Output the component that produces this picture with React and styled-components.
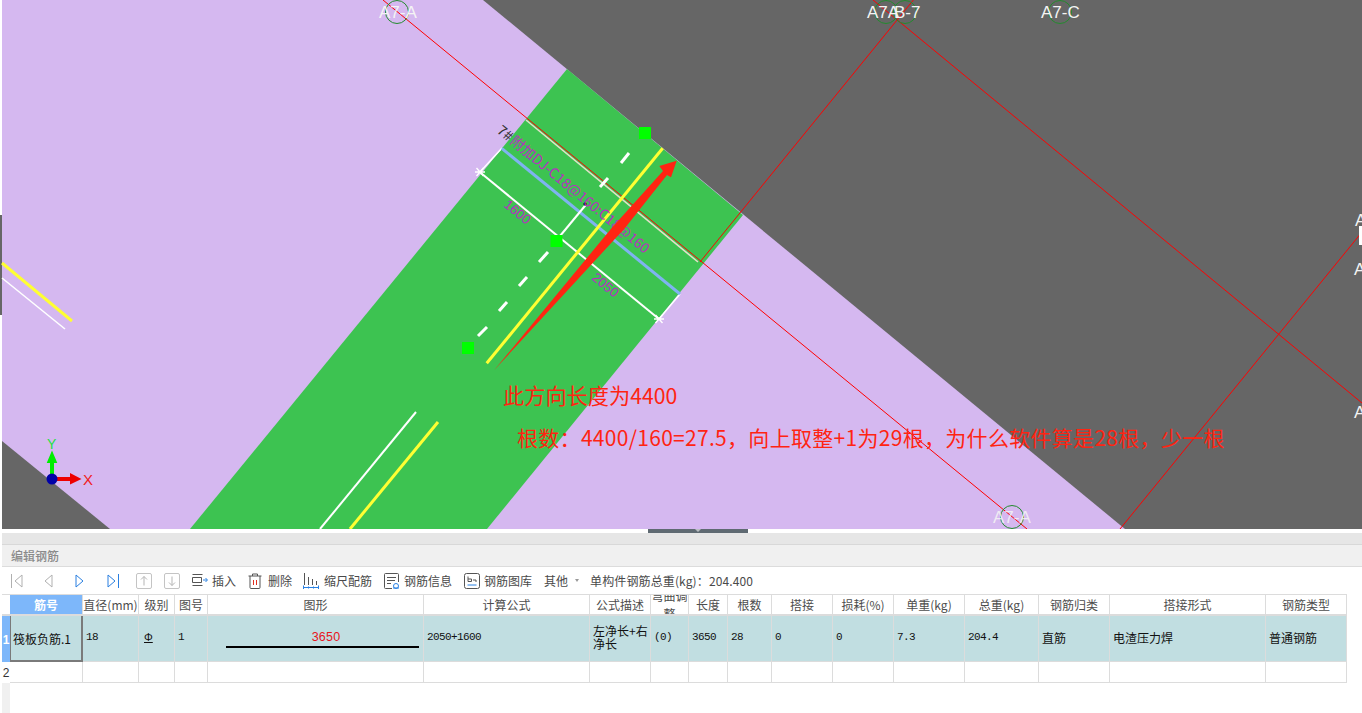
import React from 'react';
import styled, { createGlobalStyle } from 'styled-components';

const CJK = '"Noto Sans CJK SC", "Liberation Sans", sans-serif';

const Global = createGlobalStyle`
  html, body { margin: 0; padding: 0; background: #fff; overflow: hidden; }
  #root { width: 1362px; height: 713px; }
`;

const Page = styled.div`
  width: 1362px; height: 713px; display: flex; flex-direction: column;
  overflow: hidden; font-family: ${CJK}; font-size: 12px; background: #fff;
`;
const Canvas = styled.svg`
  display: block; width: 1362px; height: 529px; flex: none;
`;
const Panel = styled.section`
  flex: 1; margin-left: 2px; display: flex; flex-direction: column; min-height: 0;
`;
const Splitter = styled.div`
  height: 4px; background: #fff; display: flex; justify-content: center; flex: none; padding-left: 34px;
`;
const Grip = styled.div`
  width: 100px; height: 4px; background: #5f6a72; display: flex; justify-content: center;
  &::after {
    content: ''; width: 0; height: 0; border-left: 3px solid transparent;
    border-right: 3px solid transparent; border-top: 3px solid #b9bec2;
  }
`;
const Band = styled.div`
  height: 11px; background: #e6e6e6; border-bottom: 1px solid #d8d8d8; flex: none;
`;
const TitleBar = styled.div`
  height: 21px; background: #f0f0f0; border-bottom: 1px solid #dcdcdc; flex: none;
  display: flex; align-items: center; padding-left: 9px; color: #8a8a8a; font-weight: 500; font-size: 12px;
`;
const Toolbar = styled.div`
  height: 27px; flex: none; display: flex; align-items: center; padding-left: 9px;
  color: #4a4a4a; font-size: 12px; white-space: nowrap;
`;
const ToolIcon = styled.svg`
  flex: none; display: block; margin-left: ${p => p.$ml || 0}px;
`;
const ToolLabel = styled.span`
  margin-left: ${p => p.$ml || 0}px; line-height: 16px;
`;
const TotalLabel = styled(ToolLabel)`
  letter-spacing: 0.12px;
`;
const Caret = styled.span`
  width: 0; height: 0; margin-left: 7px; border-left: 2.5px solid transparent;
  border-right: 2.5px solid transparent; border-top: 3px solid #999;
`;
const Body = styled.div`
  flex: 1; display: flex; min-height: 0; align-items: stretch;
`;
const Sheet = styled.div`
  display: grid; align-self: flex-start;
  grid-template-columns: 8px 73px 56px 36px 33px 216px 166px 61px 38px 39px 44px 61px 61px 71px 74px 71px 156px 81px;
  grid-template-rows: 21px 46px 21px;
  border-top: 1px solid #dcdcdc;
`;
const Corner = styled.div`
  background: #fff; border-bottom: 2px solid #dcdcdc;
`;
const HeadCell = styled.div`
  box-sizing: border-box; display: flex; align-items: center; justify-content: center; text-align: center;
  overflow: hidden; color: ${p => p.$active ? '#fff' : '#4d4d4d'};
  background: ${p => p.$active ? '#7db7fa' : '#fff'};
  border-right: 1px solid #dcdcdc; border-bottom: 2px solid #dcdcdc;
  line-height: 18px; font-weight: ${p => p.$active ? 700 : 400};
`;
const RowHead = styled.div`
  display: flex; align-items: center; justify-content: center; overflow: hidden;
  background: ${p => p.$active ? '#7db7fa' : '#fff'};
  color: ${p => p.$active ? '#fff' : '#333'}; font-weight: ${p => p.$active ? 700 : 400};
  font-family: "Liberation Sans", sans-serif; font-size: 12px; padding-top: 1px; box-sizing: border-box;
`;
const Cell = styled.div`
  box-sizing: border-box; display: flex; align-items: center; padding: 0 0 3px 3px; overflow: hidden;
  background: ${p => p.$fill ? '#c1dee1' : '#fff'}; color: #111;
  border-right: 1px solid #dcdcdc; border-bottom: 1px solid #dcdcdc;
  font-size: 12px; line-height: 13px; word-break: break-all;
`;
const NumCell = styled(Cell)`
  font-family: "Liberation Mono", monospace; font-size: 11px; letter-spacing: -0.6px;
`;
const SelectedCell = styled(Cell)`
  border-right: 2px solid #7a7a7a; border-bottom: 2px solid #7a7a7a; border-left: 1px solid #7a7a7a; padding: 0 2px 0; white-space: nowrap;
`;
const GradeMark = styled.span`
  font-family: "Liberation Sans", sans-serif; font-size: 11px; text-decoration: underline; padding-left: 2px;
`;
const ShapeCell = styled(Cell)`
  flex-direction: column; align-items: center; justify-content: flex-start; padding: 14px 0 0 13px;
`;
const ShapeValue = styled.span`
  color: #e8141c; font-family: "Liberation Sans", sans-serif; font-size: 12.5px; line-height: 14px; letter-spacing: 0.2px; margin-left: 8px;
`;
const ShapeBar = styled.div`
  width: 193px; height: 2px; background: #000; margin-top: 2px;
`;
const FootGutter = styled.div`
  grid-column: 1; height: 31px; background: #f0f0f0;
`;

const COLS = ['直径(mm)', '级别', '图号', '图形', '计算公式', '公式描述', '弯曲调整', '长度', '根数', '搭接', '损耗(%)', '单重(kg)', '总重(kg)', '钢筋归类', '搭接形式', '钢筋类型'];

const Nav = {
  First: p => <ToolIcon width="12" height="14" viewBox="0 0 12 14" $ml={p.ml}><path d="M.5 0v14M11 1 4 7l7 6z" fill="none" stroke={p.c} /></ToolIcon>,
  Prev: p => <ToolIcon width="9" height="14" viewBox="0 0 9 14" $ml={p.ml}><path d="M8 1 1 7l7 6z" fill="none" stroke={p.c} /></ToolIcon>,
  Next: p => <ToolIcon width="9" height="14" viewBox="0 0 9 14" $ml={p.ml}><path d="M1 1l7 6-7 6z" fill="none" stroke={p.c} /></ToolIcon>,
  Last: p => <ToolIcon width="12" height="14" viewBox="0 0 12 14" $ml={p.ml}><path d="M11.5 0v14M1 1l7 6-7 6z" fill="none" stroke={p.c} /></ToolIcon>,
  Move: p => (
    <ToolIcon width="16" height="16" viewBox="0 0 16 16" $ml={p.ml}>
      <rect x=".5" y=".5" width="15" height="15" rx="1.5" fill="none" stroke="#c4c4c4" />
      <path d={p.up ? 'M8 12.5v-9M5 6.5l3-3 3 3' : 'M8 3.5v9M5 9.5l3 3 3-3'} fill="none" stroke="#b5b5b5" />
    </ToolIcon>
  ),
};

const InsertIcon = () => (
  <ToolIcon width="16" height="14" viewBox="0 0 16 14" $ml={12}>
    <path d="M.5 .5h10M.5 3.5h9v5h-9zM.5 11.5h10" fill="none" stroke="#555" />
    <path d="M11 6h4M13.5 4l2 2-2 2" fill="none" stroke="#2a82e4" />
  </ToolIcon>
);
const TrashIcon = () => (
  <ToolIcon width="14" height="16" viewBox="0 0 14 16" $ml={12}>
    <path d="M.5 3h13M4.5 3V1h5v2M2 3v11.5a1 1 0 0 0 1 1h8a1 1 0 0 0 1-1V3" fill="none" stroke="#555" />
    <path d="M5.5 7v5M8.5 7v5" stroke="#e03020" />
  </ToolIcon>
);
const ScaleIcon = () => (
  <ToolIcon width="16" height="16" viewBox="0 0 16 16" $ml={11}>
    <path d="M1.5 0v12M5.5 4v8M9.5 6v6M13.5 8v4" stroke="#555" fill="none" />
    <path d="M.5 14.5h15M.5 12.5v4M5.5 13.5v2M10.5 13.5v2M15.5 12.5v4" stroke="#2a82e4" fill="none" />
  </ToolIcon>
);
const InfoIcon = () => (
  <ToolIcon width="16" height="16" viewBox="0 0 16 16" $ml={12}>
    <path d="M8 15.5H1.5a1 1 0 0 1-1-1v-13a1 1 0 0 1 1-1h12a1 1 0 0 1 1 1V9" fill="none" stroke="#555" />
    <path d="M3 4.5h9M3 7.5h8M3 10.5h4" stroke="#555" fill="none" />
    <circle cx="12" cy="13" r="2.5" fill="#fff" stroke="#2a82e4" />
    <path d="M9 15h6" stroke="#2a82e4" />
  </ToolIcon>
);
const LibraryIcon = () => (
  <ToolIcon width="16" height="16" viewBox="0 0 16 16" $ml={12}>
    <rect x=".5" y=".5" width="15" height="15" rx="2" fill="none" stroke="#555" />
    <path d="M4 3.5v5h3.5V6H4M9 7h3v2" fill="none" stroke="#555" />
    <path d="M3.5 12h9" stroke="#2a82e4" />
  </ToolIcon>
);

const DASHES = [[478, 336, 487, 327], [499, 311, 507, 302], [519, 286, 527, 277], [539, 262, 548, 252], [600, 187, 608, 178], [621, 163, 629, 153]];
const HANDLES = [[645, 133], [556.5, 241], [468, 348]];
const HUBS = [[397, 12], [886, 12], [905, 12], [1060, 12], [1012, 517]];
const STARS = [[480, 172], [659, 319]];

const Star = ({ x, y }) => (
  <path d={`M${x - 5} ${y}h10M${x - 3.5} ${y - 4}l7 8M${x - 3.5} ${y + 4}l7-8`} stroke="#fff" strokeWidth="1.4" fill="none" />
);

const ANGLE = 39.4;

export default function App() {
  return (
    <Page>
      <Global />
      <Canvas viewBox="0 0 1362 529" fontFamily={CJK}>
        <rect width="1362" height="529" fill="#fff" />
        <rect x="0" y="215" width="2" height="100" fill="#666" />
        <rect x="2" width="1360" height="529" fill="#d5b8f0" />
        <path d="M483 0H1362V529H1125z" fill="#666" />
        <path d="M2 441 110 529H2z" fill="#666" />
        <path d="M567 69 743 215 487 529H190z" fill="#3dc351" />

        <path d="M526 120 698 262" stroke="#f7e4d8" strokeWidth="1.6" opacity=".9" />
        <g stroke="#ff0000" strokeWidth="1" fill="none">
          <path d="M383 0 1027 529" />
          <path d="M873 0 1362 403" />
          <path d="M915 -2 700 262" />
          <path d="M1120 529 1362 232" />
        </g>

        <path d="M2 263 72 321" stroke="#ffff33" strokeWidth="3" />
        <path d="M2 278 65 329" stroke="#fff" strokeWidth="1.6" />
        <path d="M320 529 416 412" stroke="#fff" strokeWidth="2" />
        <path d="M350 529 438 422" stroke="#ffff33" strokeWidth="3" />

        <path d="M480 172 502 148M659 319 680 294" stroke="#fff" strokeWidth="1.5" />
        <path d="M501.7 148.3 680 294" stroke="#7fb3f0" strokeWidth="3" />
        <path d="M480 172.3 659.3 319.3" stroke="#fff" strokeWidth="2" />
        <path d="M560 236 585.7 205" stroke="#fff" strokeWidth="2" />
        <path d="M583 204l2-2 2 2-2 2z" fill="#111" />
        {STARS.map(([x, y]) => <Star key={x} x={x} y={y} />)}
        {DASHES.map(([a, b, c, d]) => <path key={a} d={`M${a} ${b}L${c} ${d}`} stroke="#fff" strokeWidth="3" />)}
        <path d="M486.7 363.3 662.7 148.3" stroke="#ffff33" strokeWidth="3" />
        {HANDLES.map(([x, y]) => <rect key={x} x={x - 6} y={y - 6} width="12" height="12" fill="#00ff00" />)}

        <g transform={`translate(496 132) rotate(${ANGLE})`} fontSize="14">
          <text fill="#333">7#</text>
          <text x="17" fill="#b92fc0">附加DJ-C18@160:C18@160</text>
        </g>
        <text transform={`translate(503 206) rotate(${ANGLE})`} fill="#b92fc0" fontSize="13.5" fontFamily="Liberation Sans">1600</text>
        <text transform={`translate(591 279) rotate(${ANGLE})`} fill="#b92fc0" fontSize="13.5" fontFamily="Liberation Sans">2050</text>

        <path d="M494.3 370 611.7 228 663 171 659.3 166 676.7 160.7 671 177.3 667 175 625 228z" fill="#ff2412" />

        {HUBS.map(([x, y]) => <circle key={x} cx={x} cy={y} r="11.5" fill="none" stroke="#238b2e" strokeWidth="1" />)}
        <g fill="#f4f4f4" fontSize="17" fontFamily="Liberation Sans">
          <text x="379" y="18">A7-A</text>
          <text x="867" y="18">A7A</text>
          <text x="894" y="18">B-7</text>
          <text x="1041" y="18">A7-C</text>
          <text x="993" y="523" opacity=".85">A7-A</text>
          <text x="1355" y="226">A</text>
          <text x="1354" y="275">A</text>
          <text x="1354" y="418">A</text>
        </g>
        <rect x="1359" y="226" width="3" height="19" fill="#fff" />

        <path d="M50 479V463H46.7L52 450.5 57.3 463H54V479z" fill="#00ee00" />
        <path d="M52 477H70V473L81.5 479 70 484.5V481H52z" fill="#ee0000" />
        <circle cx="52" cy="479" r="5.5" fill="#0000a8" />
        <text x="47" y="449" fill="#22e040" fontSize="14" fontFamily="Liberation Sans">Y</text>
        <text x="83" y="485" fill="#f02020" fontSize="15" fontFamily="Liberation Sans">X</text>

        <text x="503" y="404" fill="#ff2412" fontSize="21.2">此方向长度为4400</text>
        <text x="517" y="446" fill="#ff2412" fontSize="21" letterSpacing=".3">根数：4400/160=27.5，向上取整+1为29根，为什么软件算是28根，少一根</text>
      </Canvas>
      <Splitter><Grip /></Splitter>
      <Panel>
        <Band />
        <TitleBar>编辑钢筋</TitleBar>
        <Toolbar>
          <Nav.First c="#b0b0b0" />
          <Nav.Prev c="#b0b0b0" ml={21} />
          <Nav.Next c="#2a7fe0" ml={22} />
          <Nav.Last c="#2a7fe0" ml={23} />
          <Nav.Move up ml={17} />
          <Nav.Move ml={12} />
          <InsertIcon />
          <ToolLabel $ml={4}>插入</ToolLabel>
          <TrashIcon />
          <ToolLabel $ml={6}>删除</ToolLabel>
          <ScaleIcon />
          <ToolLabel $ml={5}>缩尺配筋</ToolLabel>
          <InfoIcon />
          <ToolLabel $ml={4}>钢筋信息</ToolLabel>
          <LibraryIcon />
          <ToolLabel $ml={4}>钢筋图库</ToolLabel>
          <ToolLabel $ml={12}>其他</ToolLabel>
          <Caret />
          <TotalLabel $ml={11}>单构件钢筋总重(kg)：204.400</TotalLabel>
        </Toolbar>
        <Body>
          <Sheet>
            <Corner />
            <HeadCell $active>筋号</HeadCell>
            {COLS.map(c => <HeadCell key={c}>{c}</HeadCell>)}

            <RowHead $active>1</RowHead>
            <SelectedCell $fill>筏板负筋.1</SelectedCell>
            <NumCell $fill>18</NumCell>
            <Cell $fill><GradeMark>Φ</GradeMark></Cell>
            <NumCell $fill>1</NumCell>
            <ShapeCell $fill><ShapeValue>3650</ShapeValue><ShapeBar /></ShapeCell>
            <NumCell $fill>2050+1600</NumCell>
            <Cell $fill>左净长+右净长</Cell>
            <NumCell $fill>(0)</NumCell>
            <NumCell $fill>3650</NumCell>
            <NumCell $fill>28</NumCell>
            <NumCell $fill>0</NumCell>
            <NumCell $fill>0</NumCell>
            <NumCell $fill>7.3</NumCell>
            <NumCell $fill>204.4</NumCell>
            <Cell $fill>直筋</Cell>
            <Cell $fill>电渣压力焊</Cell>
            <Cell $fill>普通钢筋</Cell>

            <RowHead>2</RowHead>
            {Array.from({ length: 17 }, (_, i) => <Cell key={i} />)}

            <FootGutter />
          </Sheet>
        </Body>
      </Panel>
    </Page>
  );
}
